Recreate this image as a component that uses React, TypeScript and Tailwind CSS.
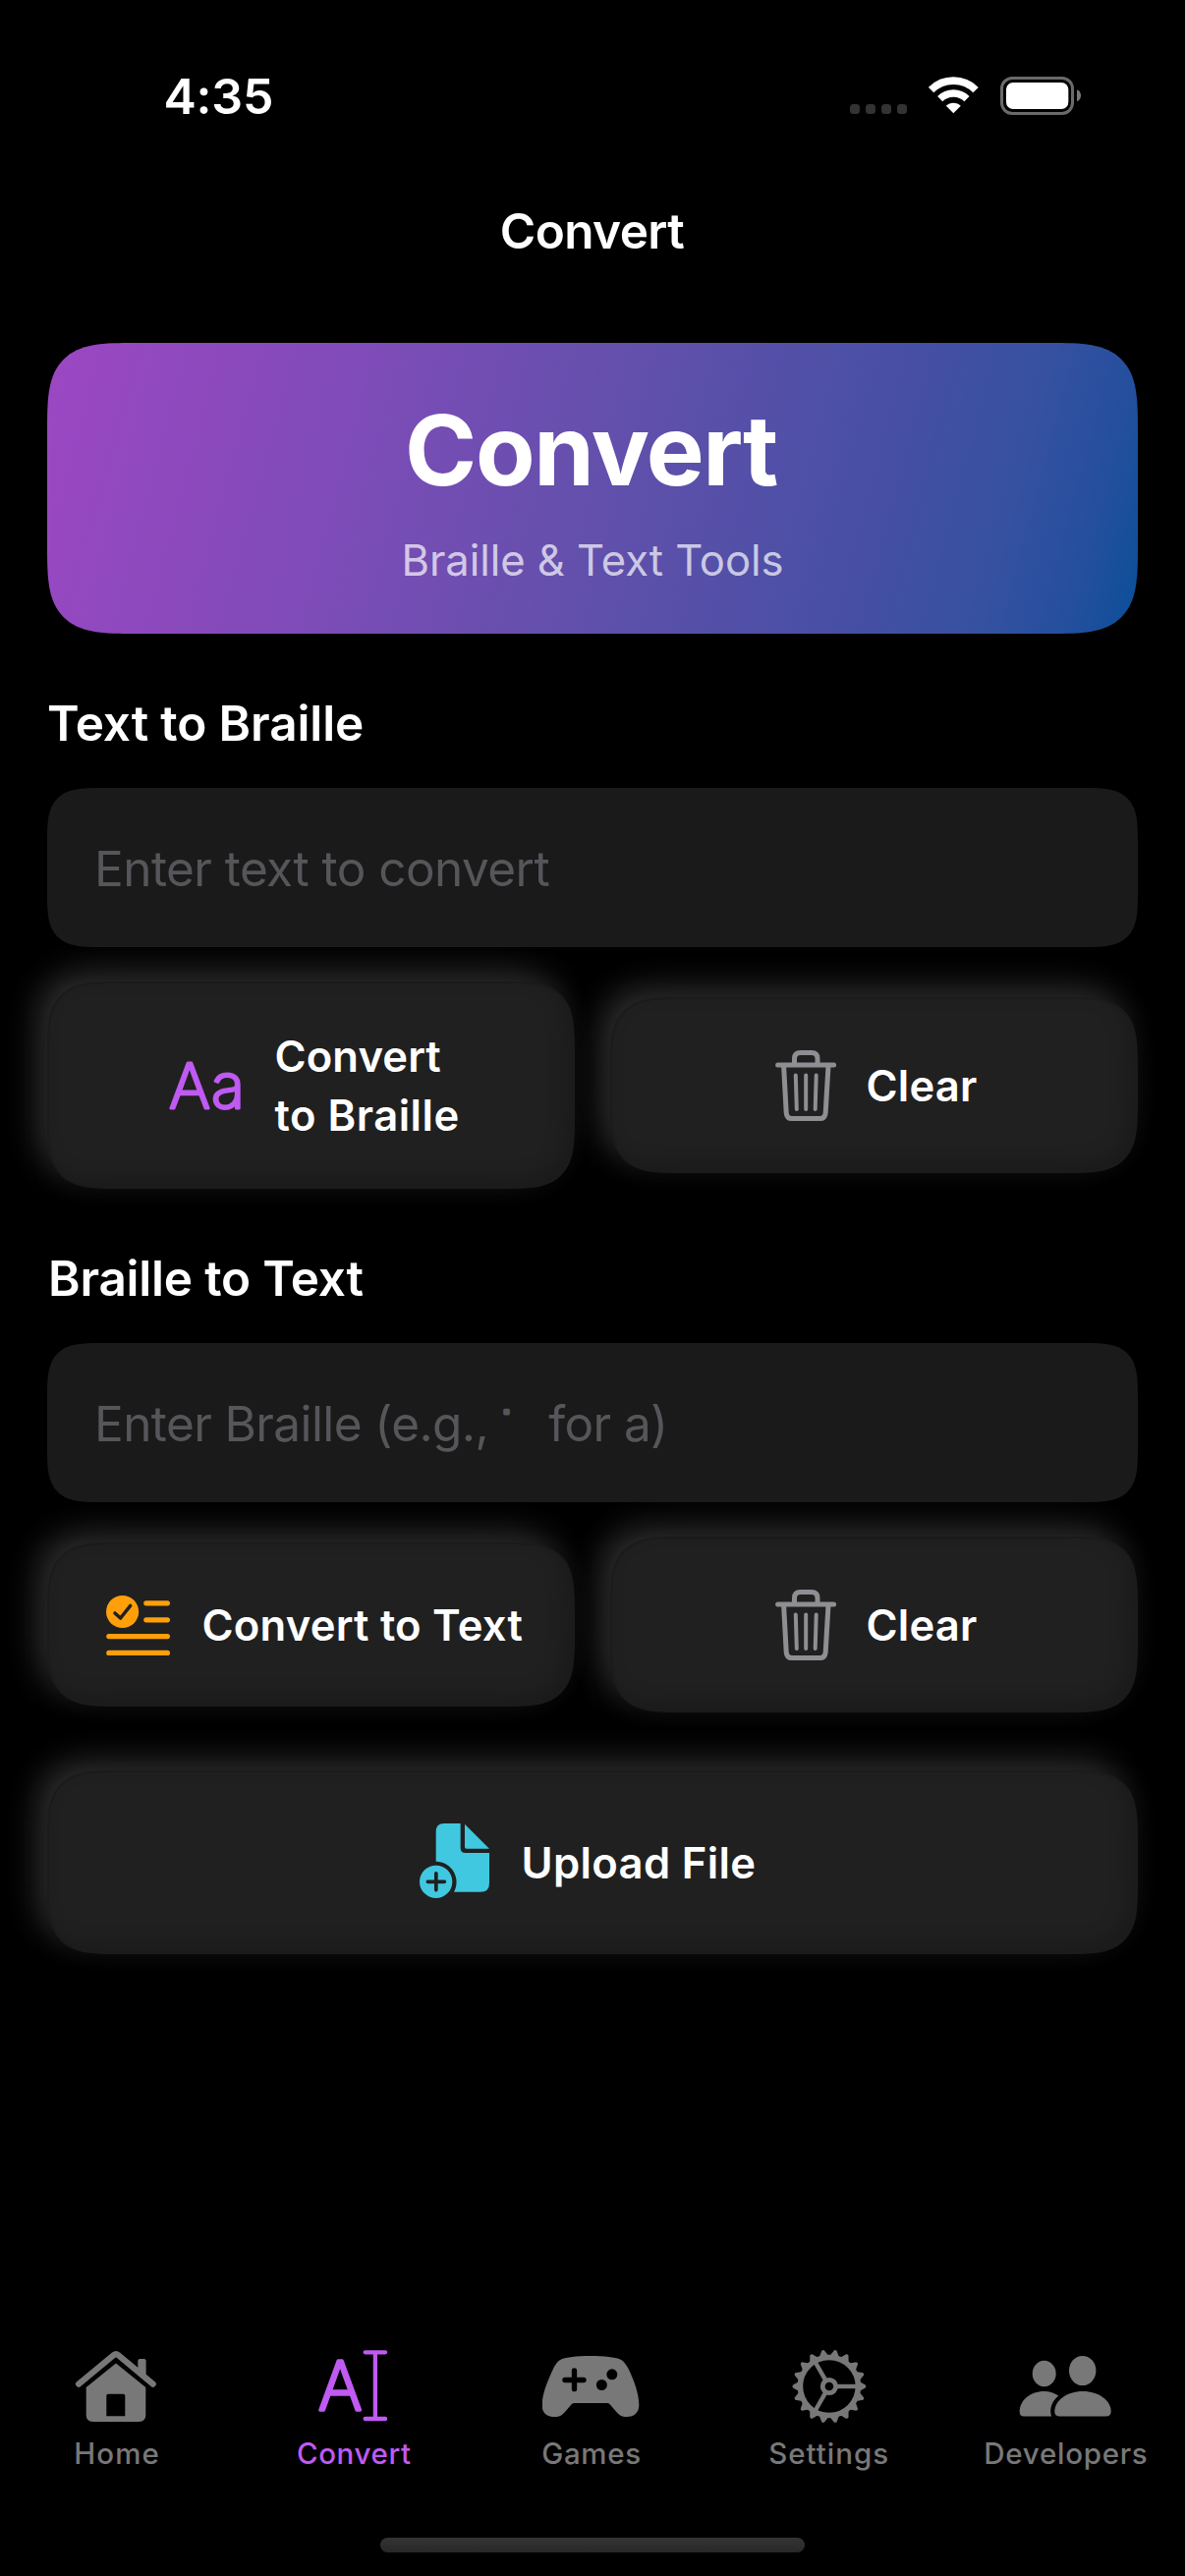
import React from "react";

const SURFACE =
  "rounded-[48px] supports-[corner-shape:squircle]:rounded-[72px] supports-[corner-shape:squircle]:[corner-shape:superellipse(1.7)]";

const RAISED =
  "flex items-center border-2 border-[#1b1b1b] bg-[#202020] text-[43.6px] font-semibold leading-[60px] text-white shadow-[12px_12px_30px_rgba(0,0,0,0.3),-10px_-10px_32px_rgba(255,255,255,0.19),inset_-8px_-8px_16px_rgba(23,23,23,0.6)]";

function StatusBar() {
  return (
    <div className="flex h-[196px] items-center justify-between pl-[166.5px] pr-[106px]">
      <span className="text-[50px] font-semibold leading-[60px] tracking-[-0.2px]">4:35</span>
      <div className="flex h-[40px] items-start">
        <div className="mt-[28px] mr-[22px] flex gap-[6px]">
          <span className="size-[10px] rounded-[3.5px] bg-[#333]" />
          <span className="size-[10px] rounded-[3.5px] bg-[#333]" />
          <span className="size-[10px] rounded-[3.5px] bg-[#333]" />
          <span className="size-[10px] rounded-[3.5px] bg-[#333]" />
        </div>
        <svg className="mr-[22px] h-[38px] w-[51px]" viewBox="285 56 153 114" fill="none" stroke="#fff">
          <path d="M292.8 96.8A96.5 96.5 0 0 1 429.2 96.8" strokeWidth="23" />
          <path d="M320 124A58 58 0 0 1 402 124" strokeWidth="22" />
          <path d="M361 168L338.6 145.6A31.5 31.5 0 0 1 383.4 145.6Z" fill="#fff" stroke="none" />
        </svg>
        <svg className="h-[39px] w-[82px]" viewBox="504 54 246 117">
          <rect x="508.5" y="58.5" width="216" height="108" rx="32" fill="none" stroke="#6a6a6a" strokeWidth="9" />
          <rect x="522" y="72" width="190" height="81" rx="21" fill="#fff" />
          <path d="M738 94Q750 99 750 112T738 130Z" fill="#777" />
        </svg>
      </div>
    </div>
  );
}

function TrashIcon() {
  return (
    <svg className="h-[74px] w-[64px] shrink-0" viewBox="788 1068 64 74" fill="none" stroke="#8e8e93" strokeLinecap="round" strokeLinejoin="round">
      <path d="M791.6 1084H848.6" strokeWidth="5" />
      <path d="M808.5 1083V1077.5Q808.5 1071.5 814.5 1071.5H826Q832 1071.5 832 1077.5V1083" strokeWidth="5" />
      <path d="M797.6 1085L800.2 1132.5Q800.6 1138.6 806 1138.6H834.4Q839.8 1138.6 840.2 1132.5L843 1085" strokeWidth="5" />
      <path d="M809.8 1094.5L810.8 1129M820.2 1094.5V1129M830.7 1094.5L829.7 1129" strokeWidth="4" />
    </svg>
  );
}

function TextFormatIcon() {
  return (
    <svg className="h-[80px] w-[82px] shrink-0 overflow-visible" viewBox="170 1066 82 80">
      <g fill="#bf5af2" stroke="#bf5af2" strokeWidth="3" strokeLinejoin="round" className="font-extralight">
        <text x="172" y="1129" fontSize="63" textLength="42" lengthAdjust="spacingAndGlyphs">A</text>
        <text x="215" y="1129" fontSize="63">a</text>
      </g>
    </svg>
  );
}

function ChecklistIcon() {
  return (
    <svg className="mt-[2px] h-[66px] w-[68px] shrink-0" viewBox="107 1622 68 66" fill="none" strokeLinecap="round" strokeLinejoin="round">
      <circle cx="124.6" cy="1640.5" r="16.6" fill="#ff9f0a" />
      <path d="M117 1642L122.6 1647L132.6 1634.5" stroke="#202020" strokeWidth="3.6" />
      <path d="M148.8 1631.8H170.4M148.8 1648.8H170.4M110.8 1665.6H170.4M110.8 1682.4H170.4" stroke="#ff9f0a" strokeWidth="5.2" />
    </svg>
  );
}

function FilePlusIcon() {
  return (
    <svg className="mb-[4px] h-[78px] w-[72px] shrink-0" viewBox="36 30 216 234">
      <path d="M111 33H161V108Q161 123 176 123H249V215Q249 242 222 242H141A63 63 0 0 0 86 149V58Q86 33 111 33Z" fill="#40c8e0" />
      <path d="M174 35L249 110H179Q174 110 174 105Z" fill="#40c8e0" />
      <circle cx="86" cy="211" r="50" fill="#40c8e0" />
      <path d="M61 211H112M86.5 185.5V236.5" stroke="#202020" strokeWidth="11" strokeLinecap="round" />
    </svg>
  );
}

function HomeIcon() {
  return (
    <svg className="h-[76px] w-[90px]" viewBox="74.9 2391 90 76">
      <path d="M81 2426.6L116.6 2397.2Q118.9 2395.3 121.2 2397.2L156.6 2426.6" fill="none" stroke="#787878" strokeWidth="6.2" strokeLinecap="round" strokeLinejoin="round" />
      <path d="M141.2 2411V2403Q141.2 2401 143.2 2401H147.5Q149.5 2401 149.5 2403V2421Z" fill="#787878" />
      <path fillRule="evenodd" d="M118.9 2405.5L149.2 2430V2458Q149.2 2465 142.2 2465H95.6Q88.6 2465 88.6 2458V2430ZM111 2436.7Q109.2 2436.7 109.2 2438.5V2459.3H128.2V2438.5Q128.2 2436.7 126.4 2436.7Z" fill="#787878" />
    </svg>
  );
}

function TextCursorIcon() {
  return (
    <svg className="h-[76px] w-[90px] overflow-visible" viewBox="316.3 2391 90 76">
      <text x="325.3" y="2453" fontSize="68" textLength="45" lengthAdjust="spacingAndGlyphs" fill="#bf5af2" stroke="#bf5af2" strokeWidth="3.6" strokeLinejoin="round" className="font-extralight">A</text>
      <path d="M373 2394.3H393.4M383.2 2394.3V2462M373 2462H393.4" fill="none" stroke="#bf5af2" strokeWidth="4.3" strokeLinecap="round" />
    </svg>
  );
}

function GamepadIcon() {
  return (
    <svg className="h-[76px] w-[100px]" viewBox="37 33 300 228">
      <path d="M184 54C140 54 110 58 96 64C84 69 78 78 70 94C52 132 36 172 36 204C36 228 50 240 75 240C90 240 98 234 106 225L126 202Q130 198 136 198H234Q240 198 243 202L263 225C271 234 279 240 294 240C318 240 332 226 332 204C332 172 318 132 300 94C291 78 285 69 273 64C258 58 228 54 184 54Z" fill="#787878" />
      <path d="M106 127.5H163M134.5 99V155" stroke="#000" strokeWidth="16" strokeLinecap="round" />
      <circle cx="249.5" cy="110.5" r="16.5" fill="#000" />
      <circle cx="218" cy="142.5" r="16.5" fill="#000" />
    </svg>
  );
}

const TEETH = Array.from({ length: 18 }, (_, i) => i * 20);

function GearIcon() {
  return (
    <svg className="h-[76px] w-[80px]" viewBox="-39.9 -38 80 76" fill="none" stroke="#787878">
      <circle r="29.5" strokeWidth="5.6" />
      <circle r="6.7" strokeWidth="4.8" />
      {[0, 120, 240].map((a) => (
        <path key={a} d="M8 0H28" strokeWidth="4.4" transform={`rotate(${a})`} />
      ))}
      {TEETH.map((a) => (
        <path key={a} d="M31 -4.8L36 -1.9Q37.4 -1.6 37.4 0T36 1.9L31 4.8Z" fill="#787878" stroke="none" transform={`rotate(${a})`} />
      ))}
    </svg>
  );
}

function PeopleIcon() {
  return (
    <svg className="h-[76px] w-[100px]" viewBox="1035.3 2391 100 76" fill="#787878">
      <ellipse cx="1063" cy="2416" rx="12" ry="13.2" />
      <ellipse cx="1102" cy="2413" rx="13.7" ry="15.1" />
      <path d="M1042.5 2459.5Q1038 2459.5 1038 2455C1038 2443 1049 2434 1063 2434C1068.5 2434 1073.5 2435.8 1077.6 2438.6C1070.5 2444.5 1068 2452.5 1070.4 2459.5Z" />
      <path d="M1079 2459.5Q1073.6 2459.5 1073.6 2454.5C1073.6 2443.5 1086 2434 1102.3 2434S1131 2443.5 1131 2454.5Q1131 2459.5 1125.6 2459.5Z" />
    </svg>
  );
}

// Braille cell for the letter "a": a single raised dot in the upper left.
function BrailleCell() {
  return (
    <svg className="ml-[12px] h-[60px] w-[49px] shrink-0 overflow-visible" viewBox="0 0 49 60">
      <text x="1.2" y="34.7" fontSize="24" className="font-['DejaVu_Sans',sans-serif]" fill="#56565a" stroke="#56565a" strokeWidth="3.2" strokeLinejoin="round">
        ⠁
      </text>
    </svg>
  );
}

function Field({ children }: { children: React.ReactNode }) {
  return (
    <div className="mt-[36px] flex h-[162px] items-center rounded-[38px] bg-[#1a1a1a] pt-[2px] pl-[48px] text-[49.5px] leading-[60px] whitespace-pre text-[#56565a] supports-[corner-shape:squircle]:rounded-[55px] supports-[corner-shape:squircle]:[corner-shape:superellipse(1.7)]">
      {children}
    </div>
  );
}

function ClearButton() {
  return (
    <button className={`${SURFACE} ${RAISED} h-[179px] pl-[165px]`}>
      <TrashIcon />
      <span className="mt-[2px] ml-[29.5px] tracking-[0.18px]">Clear</span>
    </button>
  );
}

function Tab({ icon, label, className }: { icon: React.ReactNode; label: string; className: string }) {
  return (
    <div className={`flex flex-col items-center gap-[12px] text-[29.5px] font-medium leading-[37px] ${className}`}>
      {icon}
      <span>{label}</span>
    </div>
  );
}

export default function App() {
  return (
    <div className="flex h-[2622px] w-[1206px] flex-col overflow-hidden bg-black font-['Inter',sans-serif] text-white">
      <StatusBar />
      <h1 className="flex h-[78px] items-center justify-center pr-px text-[49.5px] font-semibold tracking-[-0.6px]">Convert</h1>

      <main className="mt-[75px] flex flex-col px-[48px]">
        <section className="flex h-[296px] flex-col items-center rounded-[62px] bg-[linear-gradient(105deg,#9c47c3_0%,#824bb9_25%,#6350ac_50%,#464fa4_75%,#3651a0_86%,#234f9d_94%,#0a4f99_100%)] pt-[49px] supports-[corner-shape:squircle]:rounded-[90px] supports-[corner-shape:squircle]:[corner-shape:superellipse(1.75)]">
          <h2 className="pr-[3px] text-[99px] font-bold leading-[120px] tracking-[-1.45px]">Convert</h2>
          <p className="mt-[23px] text-[43.6px] leading-[60px] tracking-[-0.05px] text-white/70">Braille &amp; Text Tools</p>
        </section>

        <h3 className="mt-[61px] text-[49.5px] font-semibold leading-[60px] tracking-[-0.12px]">Text to Braille</h3>
        <Field>
          <span className="tracking-[-0.56px]">Enter text to convert</span>
        </Field>
        <div className="mt-[35px] grid grid-cols-2 items-center gap-[36px]">
          <button className={`${SURFACE} ${RAISED} h-[211px] pl-[120px]`}>
            <TextFormatIcon />
            <span className="mt-[2px] ml-[27.5px] text-left">
              <span className="tracking-[0.1px]">Convert</span>
              <br />
              <span className="tracking-[0.5px]">to Braille</span>
            </span>
          </button>
          <ClearButton />
        </div>

        <h3 className="mt-[61px] pl-px text-[49.5px] font-semibold leading-[60px] tracking-[-0.21px]">Braille to Text</h3>
        <Field>
          <span className="tracking-[-0.6px]">Enter Braille (e.g.,</span>
          <BrailleCell />
          <span className="tracking-[-0.6px]">for a)</span>
        </Field>
        <div className="mt-[35px] grid grid-cols-2 items-center gap-[36px]">
          <button className={`${SURFACE} ${RAISED} h-[167px] pl-[57px]`}>
            <ChecklistIcon />
            <span className="mt-[2px] ml-[30.5px] tracking-[0.22px] whitespace-nowrap">Convert to Text</span>
          </button>
          <ClearButton />
        </div>

        <button className={`${SURFACE} ${RAISED} mt-[59px] h-[187px] pl-[377px]`}>
          <FilePlusIcon />
          <span className="mt-[2px] ml-[31.5px] tracking-[0.35px]">Upload File</span>
        </button>
      </main>

      <nav className="mt-auto grid grid-cols-5">
        <Tab icon={<HomeIcon />} label="Home" className="pr-[3px] tracking-[1.1px] text-[#787878]" />
        <Tab icon={<TextCursorIcon />} label="Convert" className="pr-[3px] tracking-[0.6px] text-[#bf5af2]" />
        <Tab icon={<GamepadIcon />} label="Games" className="pr-[2px] tracking-[0.67px] text-[#787878]" />
        <Tab icon={<GearIcon />} label="Settings" className="pr-px tracking-[0.99px] text-[#787878]" />
        <Tab icon={<PeopleIcon />} label="Developers" className="pr-px tracking-[0.72px] text-[#787878]" />
      </nav>
      <div className="mx-auto mt-[67px] mb-[24px] h-[15px] w-[432px] rounded-full bg-linear-to-b from-[#343434] to-[#282828]" />
    </div>
  );
}
